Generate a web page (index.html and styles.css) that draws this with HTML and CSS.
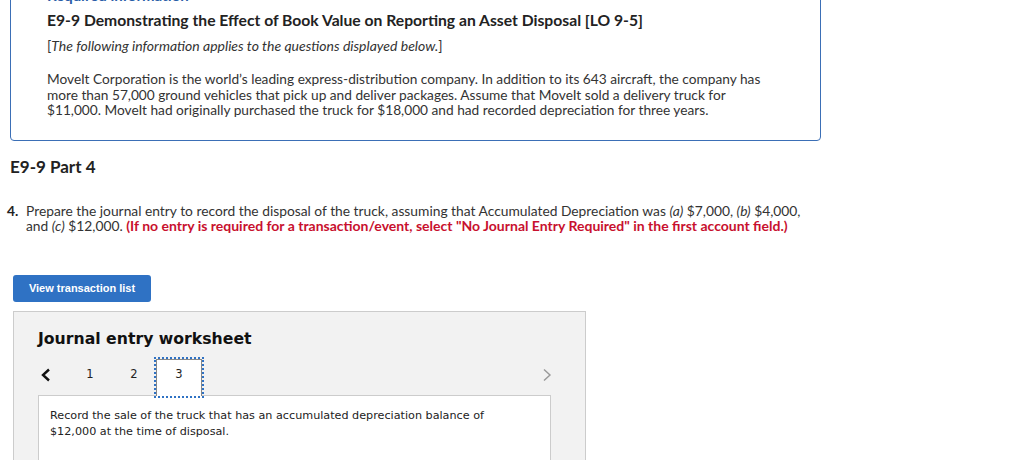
FILE: index.html
```html
<!DOCTYPE html>
<html>
<head>
<meta charset="utf-8">
<link rel="stylesheet" href="styles.css">
</head>
<body>
<section class="info-box">
  <div class="req-label">Required information</div>
  <h2 class="info-title">E9-9 Demonstrating the Effect of Book Value on Reporting an Asset Disposal [LO 9-5]</h2>
  <p class="info-note">[<em>The following information applies to the questions displayed below.</em>]</p>
  <p class="info-text">MoveIt Corporation is the world’s leading express-distribution company. In addition to its 643 aircraft, the company has more than 57,000 ground vehicles that pick up and deliver packages. Assume that MoveIt sold a delivery truck for $11,000. MoveIt had originally purchased the truck for $18,000 and had recorded depreciation for three years.</p>
</section>

<h3 class="part-title">E9-9 Part 4</h3>

<div class="question">
  <span class="q-num">4.</span>
  <p class="q-text">Prepare the journal entry to record the disposal of the truck, assuming that Accumulated Depreciation was <em>(a)</em> $7,000, <em>(b)</em> $4,000, and <em>(c)</em> $12,000. <strong class="q-warn">(If no entry is required for a transaction/event, select "No Journal Entry Required" in the first account field.)</strong></p>
</div>

<button class="btn-list">View transaction list</button>

<div class="worksheet">
  <h3 class="ws-title">Journal entry worksheet</h3>
  <div class="ws-nav">
    <span class="nav-arrow prev">
      <svg width="12" height="14" viewBox="0 0 12 14"><path d="M9 1.5 L3 7 L9 12.5" fill="none" stroke="#111" stroke-width="2.4"/></svg>
    </span>
    <span class="tab">1</span>
    <span class="tab">2</span>
    <span class="tab active">3</span>
    <span class="nav-arrow next">
      <svg width="10" height="14" viewBox="0 0 10 14"><path d="M2 1.5 L8 7 L2 12.5" fill="none" stroke="#999" stroke-width="1.4"/></svg>
    </span>
  </div>
  <div class="ws-body">
    <p>Record the sale of the truck that has an accumulated depreciation balance of $12,000 at the time of disposal.</p>
  </div>
</div>
</body>
</html>
```
FILE: styles.css
```css
html, body {
  margin: 0;
  padding: 0;
  background: #fff;
}
body {
  font-family: Lato, "Liberation Sans", sans-serif;
  color: #222;
  overflow: hidden;
  height: 460px;
}
.info-box {
  margin: -29px 0 0 10px;
  width: 811px;
  border: 1px solid #3b6fb6;
  border-radius: 4px;
  padding: 14px 0 22px 36px;
  box-sizing: border-box;
}
.req-label {
  color: #2a5ea8;
  font-weight: 700;
  font-size: 15px;
  line-height: 18px;
  margin-bottom: 6px;
}
.info-title {
  margin: 0;
  font-size: 15.7px;
  font-weight: 700;
  line-height: 20px;
  color: #222;
}
.info-note {
  margin: 7px 0 0;
  font-size: 14px;
  line-height: 18px;
  color: #333;
}
.info-text {
  margin: 16px 0 0;
  width: 722px;
  font-size: 13.7px;
  line-height: 15.6px;
  color: #333;
}
.part-title {
  margin: 16px 0 0 10px;
  font-size: 17px;
  font-weight: 700;
  line-height: 20px;
  color: #222;
}
.question {
  display: flex;
  margin: 26px 0 0 7px;
  width: 810px;
}
.q-num {
  font-weight: 700;
  font-size: 13.8px;
  line-height: 15.6px;
  width: 19px;
  flex: none;
}
.q-text {
  margin: 0;
  font-size: 13.8px;
  line-height: 15.6px;
  color: #333;
}
.q-warn {
  color: #c8102e;
  font-size: 14px;
}
.btn-list {
  display: block;
  margin: 41px 0 0 13px;
  width: 138px;
  height: 27px;
  background: #2f72c4;
  color: #fff;
  border: none;
  border-radius: 3px;
  font-family: "Liberation Sans", Arial, sans-serif;
  font-weight: 700;
  font-size: 11px;
  padding: 0;
}
.worksheet {
  margin: 9px 0 0 13px;
  width: 573px;
  height: 200px;
  background: #f2f2f2;
  border: 1px solid #ccc;
  box-sizing: border-box;
  padding: 15px 34px 0 24px;
  font-family: "DejaVu Sans", Verdana, sans-serif;
}
.ws-title {
  margin: 0;
  font-size: 15.7px;
  font-weight: 700;
  color: #111;
  line-height: 24px;
}
.ws-nav {
  display: flex;
  align-items: center;
  margin-top: 8px;
  height: 37px;
}
.nav-arrow {
  display: flex;
  align-items: center;
}
.nav-arrow.prev {
  width: 28px;
  margin-left: 2px;
  margin-top: -4px;
}
.nav-arrow.next {
  margin-left: auto;
  margin-top: -4px;
  margin-right: -1px;
}
.tab {
  width: 44px;
  text-align: center;
  font-size: 11.5px;
  color: #222;
  line-height: 30px;
  height: 37px;
}
.tab.active {
  background: #fff;
  border: 1px solid #888;
  border-bottom: none;
  outline: 2px dotted #2f72c4;
  outline-offset: 0;
  box-sizing: border-box;
  width: 46px;
  line-height: 29px;
  position: relative;
  z-index: 1;
}
.ws-body {
  background: #fff;
  border: 1px solid #ccc;
  margin-top: -1px;
  padding: 12px 25px 10px 11px;
  min-height: 80px;
}
.ws-body p {
  margin: 0;
  font-size: 11.2px;
  line-height: 16px;
  color: #222;
}
```
